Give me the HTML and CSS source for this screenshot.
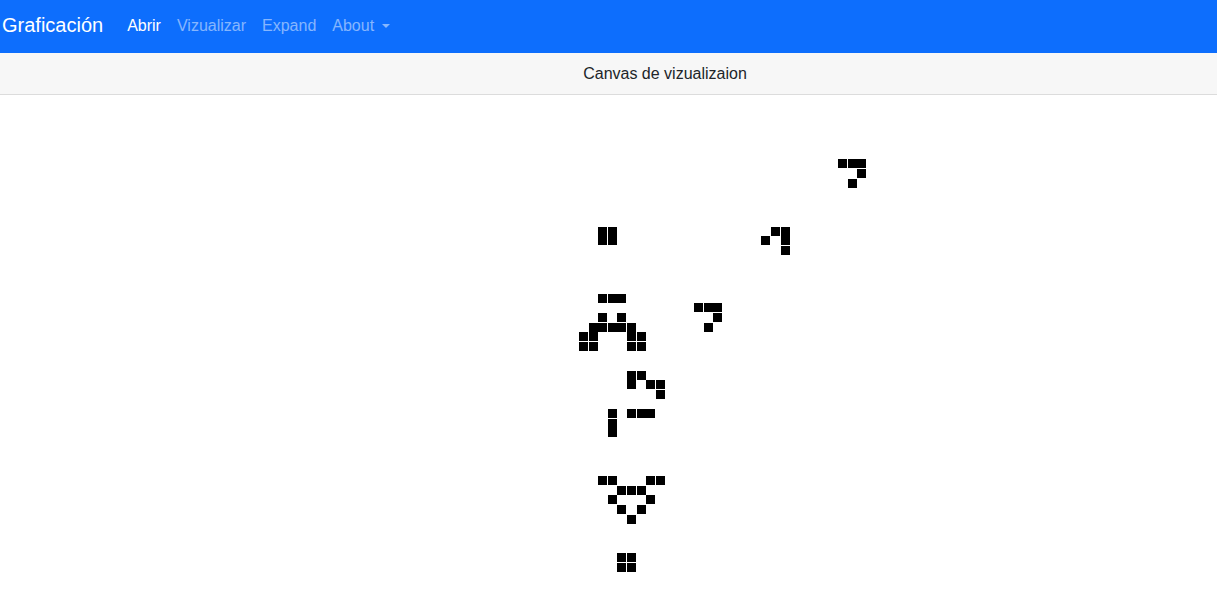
FILE: index.html
```html
<!DOCTYPE html>
<html lang="es">
<head>
<meta charset="utf-8">
<title>Graficación</title>
<link rel="stylesheet" href="styles.css">
</head>
<body>
<nav class="navbar">
  <a class="brand" href="#">Graficación</a>
  <ul class="nav">
    <li><a class="nav-link active" href="#">Abrir</a></li>
    <li><a class="nav-link" href="#">Vizualizar</a></li>
    <li><a class="nav-link" href="#">Expand</a></li>
    <li><a class="nav-link dropdown-toggle" href="#">About</a></li>
  </ul>
</nav>
<div class="subbar">Canvas de vizualizaion</div>
<svg class="board" width="1217" height="497" viewBox="0 0 1217 497" shape-rendering="crispEdges">
  <g transform="translate(578.9 198.8)" fill="#000">
    <!-- glider top right -->
    <rect x="259.2" y="-134.4" width="9" height="9"/>
    <rect x="268.8" y="-134.4" width="9" height="9"/>
    <rect x="278.4" y="-134.4" width="9" height="9"/>
    <rect x="278.4" y="-124.8" width="9" height="9"/>
    <rect x="268.8" y="-115.2" width="9" height="9"/>
    <!-- glider -->
    <rect x="192" y="-67.2" width="9" height="9"/>
    <rect x="201.6" y="-67.2" width="9" height="9"/>
    <rect x="182.4" y="-57.6" width="9" height="9"/>
    <rect x="201.6" y="-57.6" width="9" height="9"/>
    <rect x="201.6" y="-48" width="9" height="9"/>
    <!-- block -->
    <rect x="19.2" y="-67.2" width="9" height="9"/>
    <rect x="28.8" y="-67.2" width="9" height="9"/>
    <rect x="19.2" y="-57.6" width="9" height="9"/>
    <rect x="28.8" y="-57.6" width="9" height="9"/>
    <!-- gun body -->
    <rect x="19.2" y="0" width="9" height="9"/>
    <rect x="28.8" y="0" width="9" height="9"/>
    <rect x="38.4" y="0" width="9" height="9"/>
    <rect x="19.2" y="19.2" width="9" height="9"/>
    <rect x="38.4" y="19.2" width="9" height="9"/>
    <rect x="9.6" y="28.8" width="9" height="9"/>
    <rect x="19.2" y="28.8" width="9" height="9"/>
    <rect x="28.8" y="28.8" width="9" height="9"/>
    <rect x="38.4" y="28.8" width="9" height="9"/>
    <rect x="48" y="28.8" width="9" height="9"/>
    <rect x="0" y="38.4" width="9" height="9"/>
    <rect x="9.6" y="38.4" width="9" height="9"/>
    <rect x="48" y="38.4" width="9" height="9"/>
    <rect x="57.6" y="38.4" width="9" height="9"/>
    <rect x="0" y="48" width="9" height="9"/>
    <rect x="9.6" y="48" width="9" height="9"/>
    <rect x="48" y="48" width="9" height="9"/>
    <rect x="57.6" y="48" width="9" height="9"/>
    <!-- glider middle -->
    <rect x="115.2" y="9.6" width="9" height="9"/>
    <rect x="124.8" y="9.6" width="9" height="9"/>
    <rect x="134.4" y="9.6" width="9" height="9"/>
    <rect x="134.4" y="19.2" width="9" height="9"/>
    <rect x="124.8" y="28.8" width="9" height="9"/>
    <!-- shape -->
    <rect x="48" y="76.8" width="9" height="9"/>
    <rect x="57.6" y="76.8" width="9" height="9"/>
    <rect x="48" y="86.4" width="9" height="9"/>
    <rect x="67.2" y="86.4" width="9" height="9"/>
    <rect x="76.8" y="86.4" width="9" height="9"/>
    <rect x="76.8" y="96" width="9" height="9"/>
    <!-- shape -->
    <rect x="28.8" y="115.2" width="9" height="9"/>
    <rect x="48" y="115.2" width="9" height="9"/>
    <rect x="57.6" y="115.2" width="9" height="9"/>
    <rect x="67.2" y="115.2" width="9" height="9"/>
    <rect x="28.8" y="124.8" width="9" height="9"/>
    <rect x="28.8" y="134.4" width="9" height="9"/>
    <!-- v shape -->
    <rect x="19.2" y="182.4" width="9" height="9"/>
    <rect x="28.8" y="182.4" width="9" height="9"/>
    <rect x="67.2" y="182.4" width="9" height="9"/>
    <rect x="76.8" y="182.4" width="9" height="9"/>
    <rect x="38.4" y="192" width="9" height="9"/>
    <rect x="48" y="192" width="9" height="9"/>
    <rect x="57.6" y="192" width="9" height="9"/>
    <rect x="28.8" y="201.6" width="9" height="9"/>
    <rect x="67.2" y="201.6" width="9" height="9"/>
    <rect x="38.4" y="211.2" width="9" height="9"/>
    <rect x="57.6" y="211.2" width="9" height="9"/>
    <rect x="48" y="220.8" width="9" height="9"/>
    <!-- bottom block -->
    <rect x="38.4" y="259.2" width="9" height="9"/>
    <rect x="48" y="259.2" width="9" height="9"/>
    <rect x="38.4" y="268.8" width="9" height="9"/>
    <rect x="48" y="268.8" width="9" height="9"/>
  </g>
</svg>
</body>
</html>
```
FILE: styles.css
```css
html, body {
  margin: 0;
  padding: 0;
  background: #fff;
}

body {
  font-family: "Liberation Sans", Arial, Helvetica, sans-serif;
  color: #212529;
  overflow: hidden;
}

.navbar {
  display: flex;
  align-items: center;
  height: 53px;
  padding: 0 0 2px 0;
  box-sizing: border-box;
  background: #0d6efd;
}

.brand {
  font-size: 20px;
  line-height: 30px;
  color: #fff;
  text-decoration: none;
  padding-left: 2px;
  margin-right: 16px;
  margin-bottom: 2px;
}

.nav {
  display: flex;
  list-style: none;
  margin: 0;
  padding: 0;
}

.nav-link {
  display: block;
  padding: 0 8px;
  font-size: 16px;
  line-height: 24px;
  color: rgba(255, 255, 255, 0.5);
  text-decoration: none;
}

.nav-link.active {
  color: #fff;
}

.dropdown-toggle::after {
  content: "";
  display: inline-block;
  margin-left: 8px;
  vertical-align: 3px;
  border-top: 4.5px solid;
  border-left: 4.5px solid transparent;
  border-right: 4.5px solid transparent;
}

.subbar {
  height: 41px;
  line-height: 41px;
  background: #f7f7f7;
  border-bottom: 1px solid #dcdcdc;
  text-align: center;
  padding-left: 113px;
  font-size: 16px;
  color: #212529;
}

.board {
  display: block;
}
```
